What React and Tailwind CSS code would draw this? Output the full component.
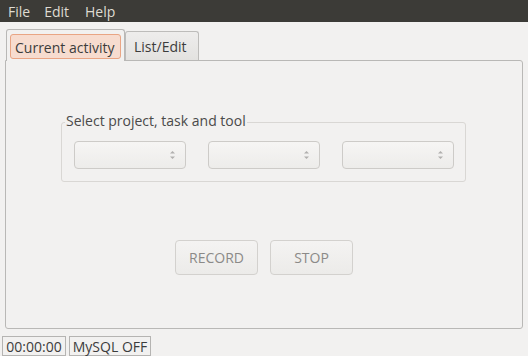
import React from "react";

function Spin() {
  return (
    <svg width="7" height="12" viewBox="0 0 7 12" className="shrink-0">
      <path d="M1 4.5 L3.5 2 L6 4.5 Z" fill="#b0afad" />
      <path d="M1 7.5 L3.5 10 L6 7.5 Z" fill="#b0afad" />
    </svg>
  );
}

function Combo() {
  return (
    <div className="w-[112px] h-[28px] rounded-[4px] border border-[#cdcbc8] bg-gradient-to-b from-[#f6f5f4] to-[#edecea] flex items-center justify-end pr-[9px]">
      <Spin />
    </div>
  );
}

function Btn({ children }) {
  return (
    <div className="w-[83px] h-[35px] rounded-[4px] border border-[#d3d1ce] bg-gradient-to-b from-[#f4f3f2] to-[#ecebe9] flex items-center justify-center text-[14px] text-[#8b8a88]">
      {children}
    </div>
  );
}

export default function App() {
  return (
    <div
      className="w-[528px] h-[356px] bg-[#f2f1f0] flex flex-col text-[#3c3c3c] overflow-hidden"
      style={{ fontFamily: '"Open Sans", "DejaVu Sans", sans-serif' }}
    >
      <div className="h-[22px] bg-[#3c3b37] flex items-center text-[14px] text-[#dfdbd2] shrink-0">
        <span className="ml-[8px]">File</span>
        <span className="ml-[14px]">Edit</span>
        <span className="ml-[16px]">Help</span>
      </div>
      <div className="flex items-end pl-[6px] mt-[6px] h-[32px] shrink-0">
        <div className="relative z-10 w-[119px] h-[32px] -mb-px border border-b-0 border-[#b9b8b6] rounded-t-[3px] bg-[#f2f1f0] pt-[4px] px-[3px]">
          <div className="h-[25px] rounded-[3px] border border-[#e9a584] bg-[#f7dccf] flex items-center pl-[4px] pt-[1px] text-[14px]">
            Current activity
          </div>
        </div>
        <div className="w-[74px] h-[29px] border border-b-0 border-[#bdbcba] rounded-t-[3px] bg-gradient-to-b from-[#eeedec] to-[#e3e2e0] flex items-center pl-[8px] pt-[1px] text-[14px]">
          List/Edit
        </div>
      </div>
      <div className="mx-[5px] h-[270px] border border-[#b9b8b6] rounded-b-[3px] rounded-tr-[3px] flex flex-col items-start">
        <div className="mt-[61px] ml-[55px] w-[405px] h-[60px] rounded-[3px] border border-[#d9d7d4] relative">
          <div className="absolute left-[3px] -top-[12px] bg-[#f2f1f0] px-[1px] text-[14px] text-[#4a4a4a] leading-[20px]">
            Select project, task and tool
          </div>
          <div className="flex gap-[22px] ml-[12px] mt-[18px]">
            <Combo />
            <Combo />
            <Combo />
          </div>
        </div>
        <div className="flex gap-[12px] ml-[169px] mt-[58px]">
          <Btn>RECORD</Btn>
          <Btn>STOP</Btn>
        </div>
      </div>
      <div className="flex gap-[3px] ml-[2px] mt-[7px] text-[14px]">
        <div className="w-[64px] h-[20px] border border-[#b5b4b2] flex items-center justify-center">00:00:00</div>
        <div className="w-[82px] h-[20px] border border-[#b5b4b2] flex items-center justify-center">MySQL OFF</div>
      </div>
    </div>
  );
}
